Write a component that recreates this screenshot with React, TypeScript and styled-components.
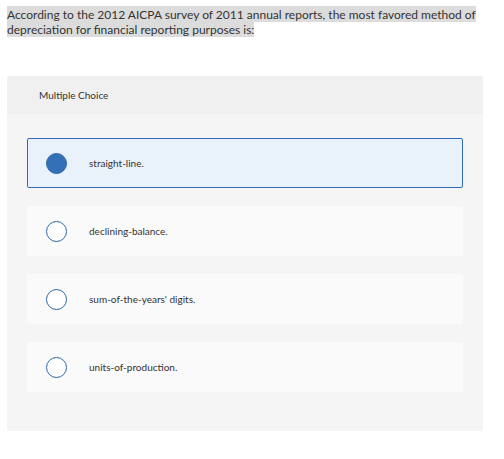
import styled, { createGlobalStyle } from "styled-components";

const GlobalStyle = createGlobalStyle`
  body {
    margin: 0;
    padding: 7px;
    background: #ffffff;
    font-family: Lato, "Open Sans", "Liberation Sans", sans-serif;
    color: #333333;
  }
`;

const choices = [
  { label: "straight-line.", selected: true },
  { label: "declining-balance.", selected: false },
  { label: "sum-of-the-years' digits.", selected: false },
  { label: "units-of-production.", selected: false },
];

export default function App() {
  return (
    <>
      <GlobalStyle />
      <Question>
        <mark>
          According to the 2012 AICPA survey of 2011 annual reports, the most favored method of
          depreciation for financial reporting purposes is:
        </mark>
      </Question>
      <Panel>
        <PanelHeader>Multiple Choice</PanelHeader>
        <ChoiceList>
          {choices.map((choice) => (
            <Choice key={choice.label} selected={choice.selected}>
              <Radio selected={choice.selected} />
              <span>{choice.label}</span>
            </Choice>
          ))}
        </ChoiceList>
      </Panel>
    </>
  );
}

const Question = styled.p`
  margin: 0;
  width: 484px;
  font-size: 12px;
  line-height: 15px;

  mark {
    background: #dcdcdc;
    color: #333333;
    padding: 1px 0 0;
    -webkit-box-decoration-break: clone;
    box-decoration-break: clone;
  }
`;

const Panel = styled.div`
  margin-top: 39px;
  width: 476px;
  background: #f5f5f5;
  border-radius: 3px;
  overflow: hidden;
`;

const PanelHeader = styled.div`
  height: 38px;
  display: flex;
  align-items: center;
  padding-left: 32px;
  background: #f0f0f0;
  font-size: 10px;
  color: #333333;
`;

const ChoiceList = styled.div`
  display: flex;
  flex-direction: column;
  gap: 18px;
  padding: 24px 20px 39px;
`;

const Choice = styled.div<{ selected: boolean }>`
  height: 50px;
  box-sizing: border-box;
  display: flex;
  align-items: center;
  gap: 22px;
  padding-left: 18px;
  border-radius: 2px;
  font-size: 10px;
  color: #333333;
  background: ${(p) => (p.selected ? "#e9f2fb" : "#fafafa")};
  border: 1px solid ${(p) => (p.selected ? "#2f6cb3" : "transparent")};
`;

const Radio = styled.span<{ selected: boolean }>`
  width: 21px;
  height: 21px;
  box-sizing: border-box;
  border-radius: 50%;
  flex-shrink: 0;
  border: 1.5px solid #2a66a8;
  background: ${(p) => (p.selected ? "#3370b7" : "#ffffff")};
`;
